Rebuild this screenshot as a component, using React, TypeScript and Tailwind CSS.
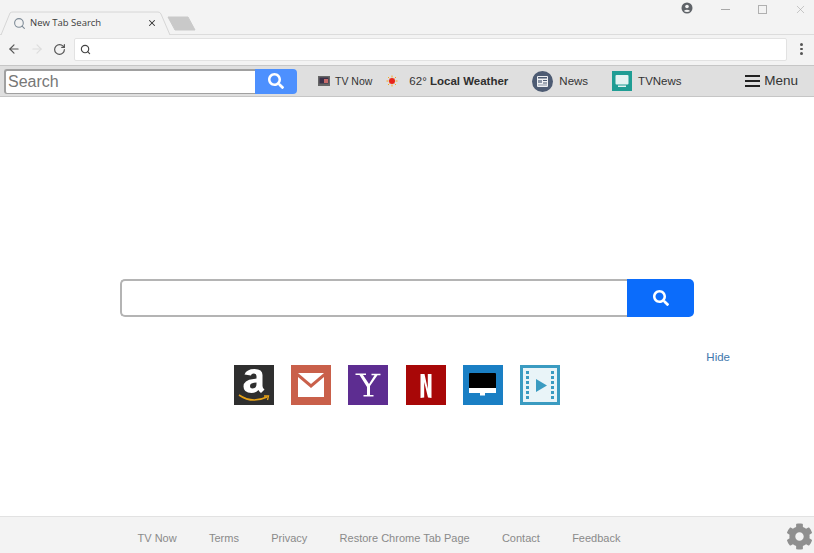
import { ArrowLeft, ArrowRight, RotateCw, Search, X } from "lucide-react";
import { FaCog, FaSearch } from "react-icons/fa";

const footerLinks = ["TV Now", "Terms", "Privacy", "Restore Chrome Tab Page", "Contact", "Feedback"];

function TabStrip() {
  return (
    <div className="relative h-[35px] bg-[#f3f3f3] border-b border-[#dcdcdc]">
      <svg className="absolute left-0 top-[11px]" width="200" height="24" viewBox="0 0 200 24">
        <path d="M1 24 L10 2 Q11 1 13 1 L158 1 Q160 1 161 3 L170 24" fill="#f3f3f3" stroke="#d6d6d6" />
        <path d="M168 6 L188 6 L195 19 L175 19 Z" fill="#c9c9c9" stroke="#c9c9c9" strokeLinejoin="round" />
      </svg>
      <div className="absolute left-[13px] top-[16px] flex items-center h-[14px]">
        <Search className="w-[13px] h-[13px] text-[#7d8a96]" strokeWidth={2} />
        <span className="ml-[4px] mt-[1px] text-[9.5px] font-['Open_Sans',sans-serif] text-[#3c3c3c] whitespace-nowrap">
          New Tab Search
        </span>
      </div>
      <X className="absolute left-[147px] top-[18px] w-[10px] h-[10px] text-[#333]" strokeWidth={2.5} />
      <div className="absolute right-0 top-0 flex items-start">
        <svg className="mt-[2px] mr-[28px]" width="12" height="12" viewBox="0 0 12 12">
          <circle cx="6" cy="6" r="5.5" fill="#5f6368" />
          <circle cx="6" cy="4.5" r="1.8" fill="#f3f3f3" />
          <path d="M2.8 9 Q6 6.4 9.2 9 Q6 11 2.8 9Z" fill="#f3f3f3" />
        </svg>
        <div className="w-[9px] h-px bg-[#a8a8a8] mt-[9px] mr-[28px]" />
        <div className="w-[9px] h-[9px] border border-[#b0b0b0] mt-[5px] mr-[27px]" />
        <X className="w-[13px] h-[13px] text-[#a0a0a0] mt-[3px] mr-[7px]" strokeWidth={1} />
      </div>
    </div>
  );
}

function AddressBar() {
  return (
    <div className="h-[30px] bg-[#f3f3f3] flex items-center pl-[7px] pr-[11px] pb-[2px]">
      <ArrowLeft className="w-[14px] h-[14px] text-[#555]" strokeWidth={2} />
      <ArrowRight className="w-[14px] h-[14px] text-[#ddd] ml-[9px]" strokeWidth={2} />
      <RotateCw className="w-[13px] h-[13px] text-[#555] ml-[9px]" strokeWidth={2.2} />
      <div className="ml-[8px] flex-1 h-[23px] bg-white border border-[#e2e2e2] rounded-[2px] flex items-center pl-[5px]">
        <Search className="w-[11px] h-[11px] text-[#444]" strokeWidth={2.5} />
      </div>
      <div className="ml-[13px] flex flex-col gap-[2px]">
        <span className="w-[3px] h-[2.5px] rounded-full bg-[#555]" />
        <span className="w-[3px] h-[2.5px] rounded-full bg-[#555]" />
        <span className="w-[3px] h-[2.5px] rounded-full bg-[#555]" />
      </div>
    </div>
  );
}

function ExtensionBar() {
  return (
    <div className="h-[32px] bg-[#dfdfdf] border-y border-[#c6c6c6] flex items-center pl-[4px] pr-[16px] text-[#333] text-[11.5px]">
      <div className="w-[251px] h-[25px] bg-white border border-t-2 border-l-2 border-[#a0a0a0] border-r-0 rounded-l-[3px] flex items-center pl-[2px] text-[16px] text-[#777]">
        Search
      </div>
      <div className="w-[42px] h-[25px] bg-[#4d90fe] rounded-r-[4px] flex items-center justify-center">
        <FaSearch className="w-[16px] h-[16px] text-white" />
      </div>
      <svg className="ml-[21px]" width="12" height="10" viewBox="0 0 12 10">
        <rect width="12" height="10" fill="#666" />
        <rect x="1.5" y="1.5" width="9" height="6" fill="#3a3048" />
        <rect x="6" y="3" width="4" height="4" fill="#c76a6a" />
      </svg>
      <span className="ml-[5px] mt-[1px] text-[10.5px]">TV Now</span>
      <svg className="ml-[14px]" width="12" height="12" viewBox="0 0 12 12">
        <circle cx="6" cy="6" r="3" fill="#e8241a" />
        <path d="M6 0.5V2.5M6 9.5V11.5M0.5 6H2.5M9.5 6H11.5M2 2L3.4 3.4M8.6 8.6L10 10M10 2L8.6 3.4M3.4 8.6L2 10" stroke="#f5a623" strokeWidth="1" />
      </svg>
      <span className="ml-[11px] mt-[1px] whitespace-nowrap">
        62° <b className="font-bold text-[#2f2f2f]">Local Weather</b>
      </span>
      <svg className="ml-[24px]" width="21" height="21" viewBox="0 0 21 21">
        <circle cx="10.5" cy="10.5" r="10.5" fill="#4d5b73" />
        <rect x="5" y="5" width="11" height="11" rx="1" fill="#eef0f3" />
        <rect x="6" y="6" width="9" height="1.5" fill="#4d5b73" />
        <rect x="6" y="9" width="4" height="3" fill="#8a94a6" />
        <rect x="11" y="9" width="4" height="1" fill="#4d5b73" />
        <rect x="11" y="11.5" width="4" height="1" fill="#4d5b73" />
        <rect x="6" y="13.5" width="9" height="1" fill="#8a94a6" />
      </svg>
      <span className="ml-[6px] mt-[1px]">News</span>
      <svg className="ml-[24px]" width="20" height="20" viewBox="0 0 20 20">
        <rect width="20" height="20" fill="#1f9d94" />
        <rect x="3.5" y="4" width="13" height="9.5" rx="1" fill="#e4f3f2" />
        <rect x="6" y="14.5" width="8" height="1.5" fill="#e4f3f2" />
      </svg>
      <span className="ml-[6px] mt-[1px]">TVNews</span>
      <div className="ml-auto flex items-center gap-[4px] text-[13.5px]">
        <div className="w-[15px] flex flex-col gap-[3px]">
          <span className="h-[2px] bg-[#222]" />
          <span className="h-[2px] bg-[#222]" />
          <span className="h-[2px] bg-[#222]" />
        </div>
        Menu
      </div>
    </div>
  );
}

function Shortcuts() {
  return (
    <div className="flex justify-center gap-[17.4px] pr-[20px]">
      <svg width="40" height="40" viewBox="0 0 40 40">
        <rect width="40" height="40" fill="#2f2f2f" />
        <path transform="translate(-0.5 -3)" d="M11 12.5 Q13 7 21 7 Q29 7 29 13 L29 24 Q29 26 31 27.5 L27.5 31 Q25.5 29.5 25 28 Q22 31 18 31 Q10 31 10 24.5 Q10 18 20 17 L23 16.6 L23 14 Q23 11.5 20 11.5 Q18 11.5 17.4 13.5 Z M23 20.5 L20.5 20.7 Q16.5 21.2 16.5 24 Q16.5 26.5 19 26.5 Q23 26.5 23 22 Z" fill="#fff" fillRule="evenodd" />
        <path d="M5 30 Q18 39 33 32" fill="none" stroke="#e8a317" strokeWidth="1.6" />
        <path d="M30 31 L34.5 31 L33.5 35" fill="none" stroke="#e8a317" strokeWidth="1.3" />
      </svg>
      <svg width="40" height="40" viewBox="0 0 40 40">
        <rect width="40" height="40" fill="#c9604a" />
        <path d="M7 8 L33 8 L20 19 Z" fill="#fff" />
        <path d="M7 12 L20 23 L33 12 L33 32 L7 32 Z" fill="#fff" />
      </svg>
      <svg width="40" height="40" viewBox="0 0 40 40">
        <rect width="40" height="40" fill="#5d2d91" />
        <path d="M7.5 8.5 L18 8.5 L18 10 L15 10 L21 19 L26.5 10.3 L23.5 10.3 L23.5 8.8 L32.5 8.8 L32.5 10.3 L29.5 10.3 L22 21 L22 30 L25.5 30 L25.5 31.5 L15.5 31.5 L15.5 30 L19 30 L19 22 L11.5 10 L7.5 10 Z" fill="#fff" />
      </svg>
      <svg width="40" height="40" viewBox="0 0 40 40">
        <rect width="40" height="40" fill="#a80707" />
        <path d="M14.5 9 L18.5 9 L21.8 24 L21.8 9 L25.5 9 L25.5 33 L22 32.5 L18.2 17 L18.2 32.5 L14.5 33 Z" fill="#fff" />
      </svg>
      <svg width="40" height="40" viewBox="0 0 40 40">
        <rect width="40" height="40" fill="#1a7fc4" />
        <path d="M6 9 Q6 8 7 8 L32 8 Q33 8 33 9 L33 23 L6 23 Z" fill="#000" />
        <path d="M6 23 L33 23 L33 28 L6 28 Z" fill="#fff" />
        <rect x="17" y="28" width="5" height="2.5" fill="#fff" />
      </svg>
      <svg width="40" height="40" viewBox="0 0 40 40">
        <rect width="40" height="40" fill="#3a9bc1" />
        <rect x="3" y="3" width="34" height="34" fill="#e9f4f8" />
        <g fill="#3a9bc1">
          <rect x="6" y="6" width="3" height="3" />
          <rect x="6" y="11" width="3" height="3" />
          <rect x="6" y="16" width="3" height="3" />
          <rect x="6" y="21" width="3" height="3" />
          <rect x="6" y="26" width="3" height="3" />
          <rect x="6" y="31" width="3" height="3" />
          <rect x="31" y="6" width="3" height="3" />
          <rect x="31" y="11" width="3" height="3" />
          <rect x="31" y="16" width="3" height="3" />
          <rect x="31" y="21" width="3" height="3" />
          <rect x="31" y="26" width="3" height="3" />
          <rect x="31" y="31" width="3" height="3" />
          <path d="M16 14 L27 20.5 L16 27 Z" />
        </g>
      </svg>
    </div>
  );
}

export default function App() {
  return (
    <div className="w-[814px] h-[553px] flex flex-col overflow-hidden bg-white font-['Liberation_Sans',Arial,sans-serif]">
      <TabStrip />
      <AddressBar />
      <ExtensionBar />
      <main className="flex-1 flex flex-col">
        <div className="mt-[182px] mx-[120px] flex h-[38px]">
          <div className="flex-1 border-2 border-[#b4b4b4] border-r-0 rounded-l-[5px] bg-white" />
          <div className="w-[67px] bg-[#0b6cfb] rounded-r-[5px] flex items-center justify-center">
            <FaSearch className="w-[16px] h-[16px] text-white" />
          </div>
        </div>
        <div className="mt-[33px] pr-[84px] text-right text-[11.5px] leading-[14px] text-[#3f78ad]">Hide</div>
        <div className="mt-[1px]">
          <Shortcuts />
        </div>
      </main>
      <footer className="relative h-[37px] bg-[#f3f3f3] border-t border-[#e2e2e2] flex items-center justify-center gap-[32.3px] text-[11px] text-[#8a8a8a] pr-[56px] pt-[7px]">
        {footerLinks.map((link) => (
          <span key={link}>{link}</span>
        ))}
        <FaCog className="absolute left-[786px] top-[6px] w-[27px] h-[27px] text-[#8f8f8f]" />
      </footer>
    </div>
  );
}
